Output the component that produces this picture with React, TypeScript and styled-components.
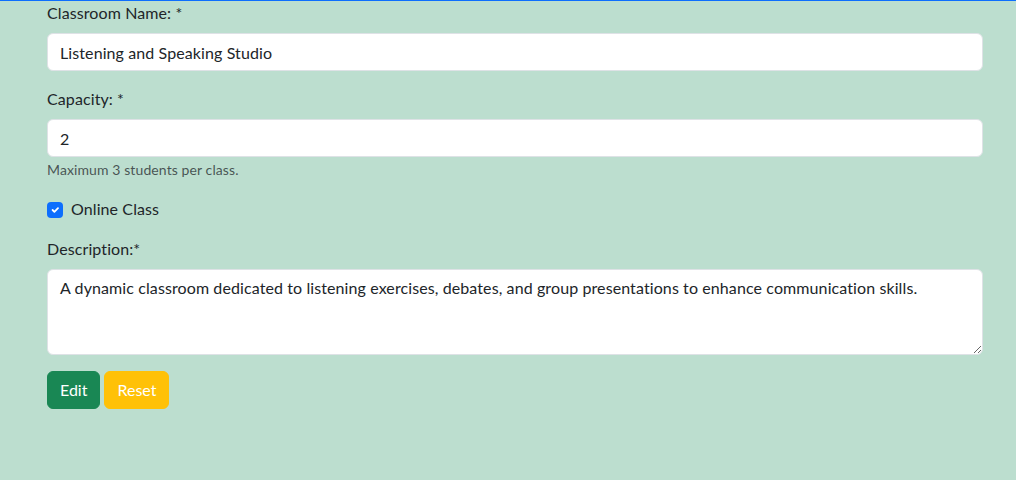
import React, { useState } from "react";
import styled, { createGlobalStyle } from "styled-components";

const GlobalStyle = createGlobalStyle`
  html, body {
    margin: 0;
    padding: 0;
    background: #bcdecf;
  }
  body {
    font-family: "Segoe UI", Lato, "Liberation Sans", sans-serif;
    font-size: 16px;
    line-height: 1.5;
    letter-spacing: 0.1px;
    color: #212529;
  }
  * { box-sizing: border-box; }
`;

const Page = styled.div`
  min-height: 480px;
  border-top: 1px solid #0d6efd;
  background: #bcdecf;
`;

const Form = styled.form`
  width: 936px;
  margin-left: 47px;
  display: flex;
  flex-direction: column;
`;

const Field = styled.div`
  display: flex;
  flex-direction: column;
  margin-bottom: 16px;
`;

const Label = styled.label`
  display: block;
  margin-bottom: 8px;
  line-height: 24px;
`;

const Input = styled.input`
  display: block;
  width: 100%;
  height: 38px;
  padding: 6px 12px;
  font: inherit;
  letter-spacing: inherit;
  line-height: 24px;
  color: #212529;
  background: #fff;
  border: 1px solid #dee2e6;
  border-radius: 6px;
  outline: none;
`;

const TextArea = styled.textarea`
  display: block;
  width: 100%;
  height: 86px;
  padding: 6px 12px;
  font: inherit;
  letter-spacing: inherit;
  line-height: 24px;
  color: #212529;
  background: #fff;
  border: 1px solid #dee2e6;
  border-radius: 6px;
  outline: none;
  resize: vertical;
`;

const Help = styled.div`
  margin-top: 2px;
  margin-bottom: 2px;
  font-size: 14px;
  line-height: 21px;
  color: rgba(33, 37, 41, 0.75);
`;

const CheckRow = styled.div`
  display: flex;
  align-items: center;
  height: 24px;
  gap: 8px;
  margin-bottom: 15px;
`;

const CheckLabel = styled.span`
  position: relative;
  top: -1px;
`;

const CheckBox = styled.span`
  width: 16px;
  height: 16px;
  border-radius: 4px;
  background: #0d6efd;
  display: flex;
  align-items: center;
  justify-content: center;
`;

const Buttons = styled.div`
  display: flex;
  gap: 4px;
`;

const Button = styled.button<{ $variant: "success" | "warning" }>`
  height: 38px;
  padding: 6px 12px;
  font: inherit;
  letter-spacing: normal;
  line-height: 24px;
  color: #fff;
  border: 1px solid ${(p) => (p.$variant === "success" ? "#198754" : "#ffc107")};
  background: ${(p) => (p.$variant === "success" ? "#198754" : "#ffc107")};
  border-radius: 6px;
  cursor: pointer;
`;

export default function App() {
  const [name, setName] = useState("Listening and Speaking Studio");
  const [cap, setCap] = useState("2");
  const [desc, setDesc] = useState(
    "A dynamic classroom dedicated to listening exercises, debates, and group presentations to enhance communication skills."
  );
  return (
    <Page>
      <GlobalStyle />
      <Form onSubmit={(e) => e.preventDefault()}>
        <Field>
          <Label>Classroom Name: *</Label>
          <Input value={name} onChange={(e) => setName(e.target.value)} />
        </Field>
        <Field>
          <Label>Capacity: *</Label>
          <Input value={cap} onChange={(e) => setCap(e.target.value)} />
          <Help>Maximum 3 students per class.</Help>
        </Field>
        <CheckRow>
          <CheckBox>
            <svg width="12" height="12" viewBox="0 0 20 20">
              <path
                d="M6 10l3 3 6-6"
                fill="none"
                stroke="#fff"
                strokeWidth="3"
                strokeLinecap="round"
                strokeLinejoin="round"
              />
            </svg>
          </CheckBox>
          <CheckLabel>Online Class</CheckLabel>
        </CheckRow>
        <Field>
          <Label>Description:*</Label>
          <TextArea value={desc} onChange={(e) => setDesc(e.target.value)} />
        </Field>
        <Buttons>
          <Button type="button" $variant="success">Edit</Button>
          <Button type="button" $variant="warning">Reset</Button>
        </Buttons>
      </Form>
    </Page>
  );
}
